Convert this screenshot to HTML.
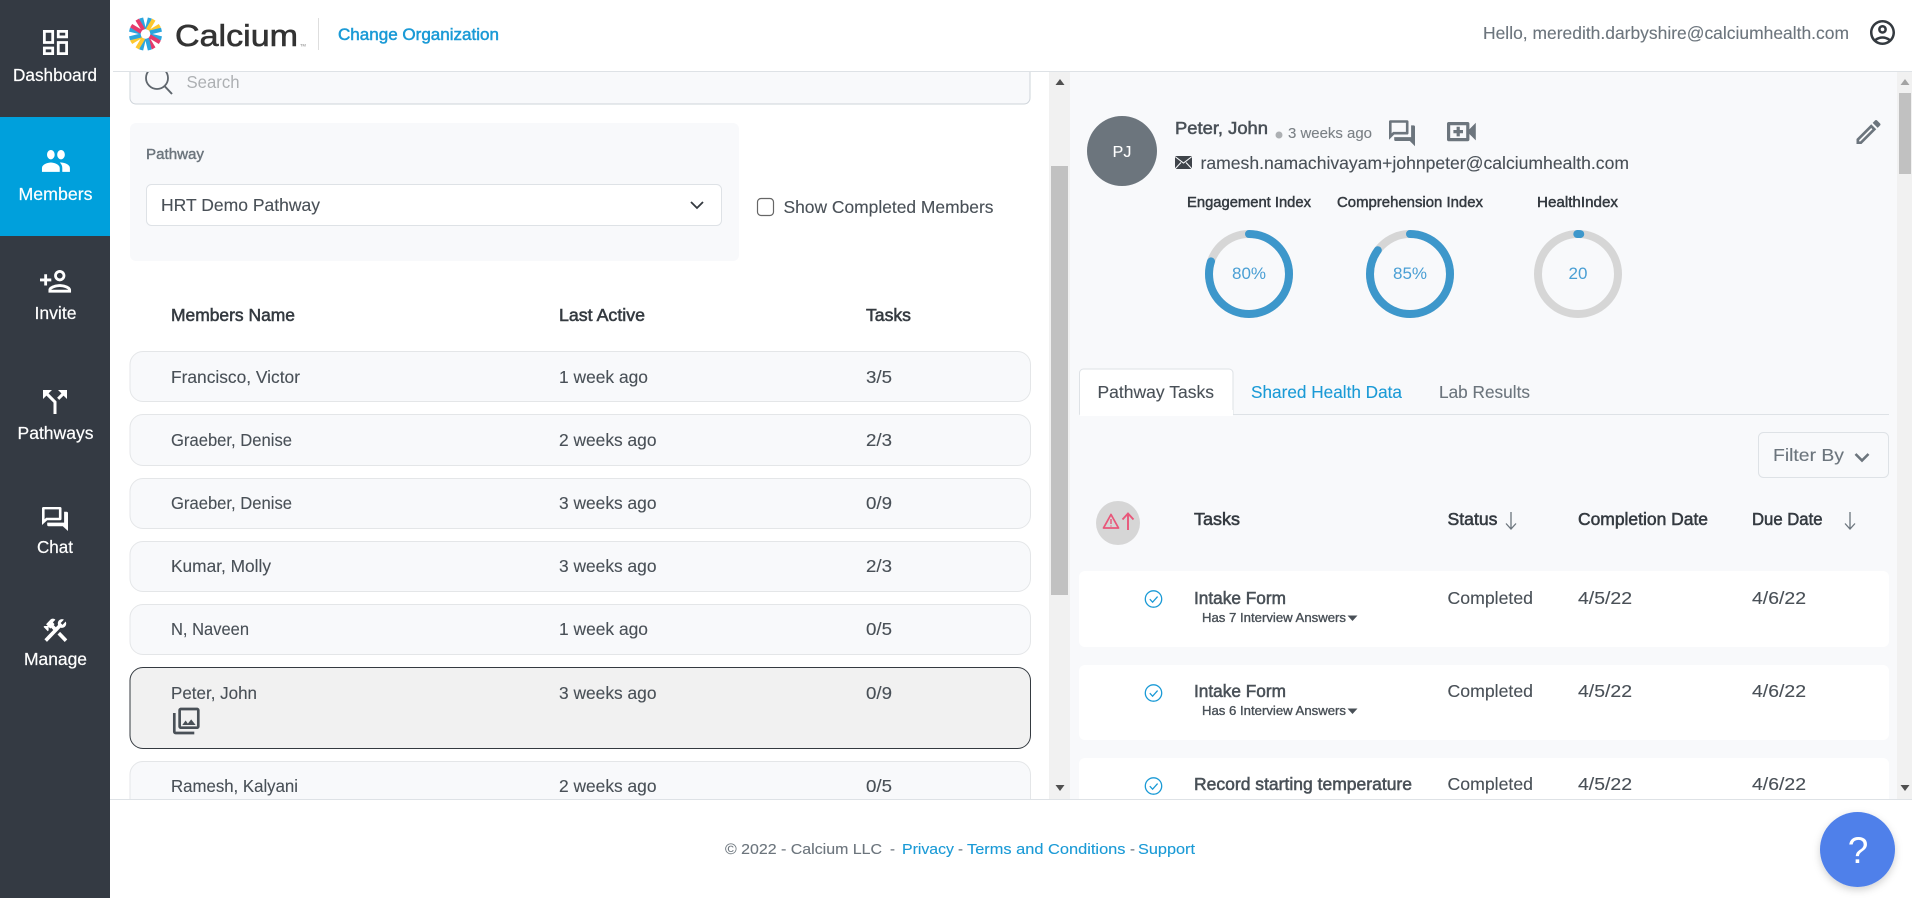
<!DOCTYPE html>
<html lang="en">
<head>
<meta charset="utf-8">
<title>Calcium</title>
<style>
html,body{margin:0;padding:0;background:#fff;width:1912px;height:898px;overflow:hidden}
svg{display:block}
text{font-family:"Liberation Sans",Arial,sans-serif;font-size:17.6px;fill:#495057;stroke:#495057;stroke-width:.12px}
.nav{fill:#fff;stroke:#fff;stroke-width:.2px}
.m{stroke:#495057;stroke-width:.55px}
.h{fill:#343a40;stroke:#343a40;stroke-width:.55px}
.b{fill:#1a9ad6;stroke:#1a9ad6}
.g{fill:#6c757d;stroke:#6c757d}
.p{fill:#4a9fd4;font-size:17px;stroke:none}
.l{font-size:14.4px;fill:#343a40;stroke:#343a40;stroke-width:.45px}
.f{font-size:15px}
.s{font-size:12.8px;stroke-width:.35px}
</style>
</head>
<body>
<svg width="1912" height="898" viewBox="0 0 1912 898" xmlns="http://www.w3.org/2000/svg">
<rect width="1912" height="898" fill="#fff"/>

<!-- LEFT PANEL -->
<path d="M130 60H1030V98a6 6 0 0 1-6 6H136a6 6 0 0 1-6-6Z" fill="#f8f9fb" stroke="#ced4da"/>
<circle cx="157" cy="78" r="11" fill="none" stroke="#5f666d" stroke-width="1.800"/>
<path d="M164.500 86L172 94" stroke="#5f666d" stroke-width="2" fill="none"/>
<text x="186.500" y="88" textLength="53" lengthAdjust="spacingAndGlyphs" style="fill:#adb0b3;stroke:none">Search</text>

<rect x="130" y="123" width="609" height="138" rx="6" fill="#f8f9fb"/>
<text x="146" y="159" style="font-size:14.4px;fill:#6c757d;stroke:#6c757d;stroke-width:.4px" textLength="58" lengthAdjust="spacingAndGlyphs">Pathway</text>
<rect x="146.500" y="184.500" width="575" height="41" rx="5" fill="#fff" stroke="#dee2e6"/>
<text x="161" y="211" textLength="159" lengthAdjust="spacingAndGlyphs">HRT Demo Pathway</text>
<path d="M691 202l6 6 6-6" fill="none" stroke="#343a40" stroke-width="1.800"/>
<rect x="757.500" y="198.500" width="16" height="17" rx="3.500" fill="#fff" stroke="#666" stroke-width="1.200"/>
<text x="783.500" y="213" textLength="210" lengthAdjust="spacingAndGlyphs">Show Completed Members</text>

<text class="h" x="171" y="321" textLength="124" lengthAdjust="spacingAndGlyphs">Members Name</text>
<text class="h" x="559" y="321" textLength="86" lengthAdjust="spacingAndGlyphs">Last Active</text>
<text class="h" x="866" y="321" textLength="45" lengthAdjust="spacingAndGlyphs">Tasks</text>

<rect x="130" y="351.500" width="900.500" height="50" rx="13" fill="#f8f9fb" stroke="#e4e6e8"/>
<text x="171" y="383" textLength="129" lengthAdjust="spacingAndGlyphs">Francisco, Victor</text>
<text x="559" y="383" textLength="89" lengthAdjust="spacingAndGlyphs">1 week ago</text>
<text x="866" y="383" textLength="26" lengthAdjust="spacingAndGlyphs">3/5</text>

<rect x="130" y="414.500" width="900.500" height="51" rx="13" fill="#f8f9fb" stroke="#e4e6e8"/>
<text x="171" y="446" textLength="121" lengthAdjust="spacingAndGlyphs">Graeber, Denise</text>
<text x="559" y="446" textLength="97.500" lengthAdjust="spacingAndGlyphs">2 weeks ago</text>
<text x="866" y="446" textLength="26" lengthAdjust="spacingAndGlyphs">2/3</text>

<rect x="130" y="478.500" width="900.500" height="50" rx="13" fill="#f8f9fb" stroke="#e4e6e8"/>
<text x="171" y="509" textLength="121" lengthAdjust="spacingAndGlyphs">Graeber, Denise</text>
<text x="559" y="509" textLength="97.500" lengthAdjust="spacingAndGlyphs">3 weeks ago</text>
<text x="866" y="509" textLength="26" lengthAdjust="spacingAndGlyphs">0/9</text>

<rect x="130" y="541.500" width="900.500" height="50" rx="13" fill="#f8f9fb" stroke="#e4e6e8"/>
<text x="171" y="572" textLength="100" lengthAdjust="spacingAndGlyphs">Kumar, Molly</text>
<text x="559" y="572" textLength="97.500" lengthAdjust="spacingAndGlyphs">3 weeks ago</text>
<text x="866" y="572" textLength="26" lengthAdjust="spacingAndGlyphs">2/3</text>

<rect x="130" y="604.500" width="900.500" height="50" rx="13" fill="#f8f9fb" stroke="#e4e6e8"/>
<text x="171" y="635" textLength="78" lengthAdjust="spacingAndGlyphs">N, Naveen</text>
<text x="559" y="635" textLength="89" lengthAdjust="spacingAndGlyphs">1 week ago</text>
<text x="866" y="635" textLength="26" lengthAdjust="spacingAndGlyphs">0/5</text>

<rect x="130" y="667.500" width="900.500" height="81" rx="13" fill="#f1f1f1" stroke="#343a40"/>
<text x="171" y="699" textLength="86" lengthAdjust="spacingAndGlyphs">Peter, John</text>
<text x="559" y="699" textLength="97.500" lengthAdjust="spacingAndGlyphs">3 weeks ago</text>
<text x="866" y="699" textLength="26" lengthAdjust="spacingAndGlyphs">0/9</text>
<g transform="translate(170.300 705) scale(1.333)" fill="#495057"><path d="M20 4v12H8V4h12m0-2H8c-1.100 0-2 .9-2 2v12c0 1.100.9 2 2 2h12c1.100 0 2-.9 2-2V4c0-1.100-.9-2-2-2zm-8.500 9.670l1.690 2.260 2.480-3.100L19 15H9zM2 6v14c0 1.100.9 2 2 2h14v-2H4V6H2z"/></g>

<rect x="130" y="761.500" width="900.500" height="60" rx="13" fill="#f8f9fb" stroke="#e4e6e8"/>
<text x="171" y="792" textLength="127" lengthAdjust="spacingAndGlyphs">Ramesh, Kalyani</text>
<text x="559" y="792" textLength="97.500" lengthAdjust="spacingAndGlyphs">2 weeks ago</text>
<text x="866" y="792" textLength="26" lengthAdjust="spacingAndGlyphs">0/5</text>

<!-- left scrollbar -->
<rect x="1049" y="71" width="21" height="728" fill="#f1f1f1"/>
<rect x="1051" y="166" width="17" height="429" fill="#c1c1c1"/>
<path d="M1060 79l4.500 6h-9z" fill="#505050"/>
<path d="M1060 791l4.500-6h-9z" fill="#505050"/>

<!-- RIGHT PANEL -->
<rect x="1070" y="71" width="827" height="728" fill="#f8f9fb"/>
<rect x="1897" y="71" width="15" height="728" fill="#f1f1f1"/>
<rect x="1899" y="93" width="12" height="81" fill="#c1c1c1"/>
<path d="M1905 79l4.500 6h-9z" fill="#a3a3a3"/>
<path d="M1905 791l4.500-6h-9z" fill="#505050"/>

<circle cx="1122" cy="151" r="35" fill="#6c757d"/>
<text x="1122" y="157" text-anchor="middle" style="fill:#fff;stroke:#fff;font-size:16px">PJ</text>
<text class="m" x="1175" y="134" textLength="93" lengthAdjust="spacingAndGlyphs">Peter, John</text>
<circle cx="1279" cy="135" r="3.500" fill="#adb0b3"/>
<text x="1288" y="138" textLength="84" lengthAdjust="spacingAndGlyphs" style="font-size:15px;fill:#7b8186;stroke:#7b8186">3 weeks ago</text>
<g transform="translate(1386.400 117.600) scale(1.300)" fill="#6c757d"><path d="M15 4v7H5.170l-.59.59-.58.58V4h11m1-2H3c-.55 0-1 .45-1 1v14l4-4h10c.55 0 1-.45 1-1V3c0-.55-.45-1-1-1zm5 4h-2v9H6v2c0 .55.45 1 1 1h11l4 4V7c0-.55-.45-1-1-1z"/></g>
<g transform="translate(1442.200 112.400) scale(1.600)" fill="#6c757d"><path d="M15 8v8H5V8h10m1-2H4c-.55 0-1 .45-1 1v10c0 .55.45 1 1 1h12c.55 0 1-.45 1-1v-3.500l4 4v-11l-4 4V7c0-.55-.45-1-1-1zm-3 5h-2V9H9v2H7v2h2v2h2v-2h2z"/></g>
<g transform="translate(1852.500 116) scale(1.333)" fill="#6c757d"><path d="M14.060 9.020l.92.92L5.920 19H5v-.92l9.060-9.060M17.660 3c-.25 0-.51.1-.7.29l-1.830 1.830 3.750 3.750 1.830-1.830c.39-.39.39-1.020 0-1.410l-2.340-2.340c-.2-.2-.45-.29-.71-.29zm-3.600 3.190L3 17.250V21h3.750L17.810 9.940l-3.750-3.750z"/></g>

<rect x="1175" y="156" width="17" height="13" fill="#3f444a"/>
<path d="M1175 156.500l8.500 6.500 8.500-6.500M1175 169l6-6.500M1192 169l-6-6.500" stroke="#f8f9fb" stroke-width="1.100" fill="none"/>
<text x="1200.500" y="169" textLength="428.500" lengthAdjust="spacingAndGlyphs">ramesh.namachivayam+johnpeter@calciumhealth.com</text>

<text class="l" x="1187" y="207" textLength="124" lengthAdjust="spacingAndGlyphs">Engagement Index</text>
<text class="l" x="1337" y="207" textLength="146" lengthAdjust="spacingAndGlyphs">Comprehension Index</text>
<text class="l" x="1537" y="207" textLength="81" lengthAdjust="spacingAndGlyphs">HealthIndex</text>

<g fill="none" stroke-width="8">
<circle cx="1249" cy="274" r="40" stroke="#d6d6d6"/>
<circle cx="1249" cy="274" r="40" stroke="#3d97cb" stroke-linecap="round" stroke-dasharray="201 251.300" transform="rotate(-90 1249 274)"/>
<circle cx="1410" cy="274" r="40" stroke="#d6d6d6"/>
<circle cx="1410" cy="274" r="40" stroke="#3d97cb" stroke-linecap="round" stroke-dasharray="213.600 251.300" transform="rotate(-90 1410 274)"/>
<circle cx="1578" cy="274" r="40" stroke="#d6d6d6"/>
<circle cx="1578" cy="274" r="40" stroke="#3d97cb" stroke-linecap="round" stroke-dasharray="3 251.300" transform="rotate(-91 1578 274)"/>
</g>
<text class="p" x="1249" y="279" text-anchor="middle">80%</text>
<text class="p" x="1410" y="279" text-anchor="middle">85%</text>
<text class="p" x="1578" y="279" text-anchor="middle">20</text>

<!-- tabs -->
<path d="M1079.500 414.500H1889" stroke="#dee2e6" fill="none"/>
<path d="M1079.500 414.500V373a4 4 0 0 1 4-4H1229a4 4 0 0 1 4 4V414.500" fill="#fff" stroke="#dee2e6"/>
<rect x="1080" y="410" width="153" height="6" fill="#fff"/>
<text x="1097.500" y="398" textLength="116.500" lengthAdjust="spacingAndGlyphs">Pathway Tasks</text>
<text class="b" x="1251" y="398" textLength="151" lengthAdjust="spacingAndGlyphs">Shared Health Data</text>
<text class="g" x="1439" y="398" textLength="91" lengthAdjust="spacingAndGlyphs">Lab Results</text>

<rect x="1758.500" y="432.500" width="130" height="45" rx="5" fill="none" stroke="#dee2e6"/>
<text class="g" x="1773" y="461" textLength="71" lengthAdjust="spacingAndGlyphs">Filter By</text>
<path d="M1855.500 454l6.500 6.500 6.500-6.500" fill="none" stroke="#6c757d" stroke-width="2.600"/>

<!-- table header -->
<circle cx="1118" cy="523" r="22" fill="#d6d6d6"/>
<path d="M1111 514.500l7.500 13.500h-15z" fill="none" stroke="#e8577a" stroke-width="1.800" stroke-linejoin="round"/>
<path d="M1111 519v5M1111 525.500v1" stroke="#e8577a" stroke-width="1.400"/>
<path d="M1128 530V514M1122.500 519.500l5.500-6 5.500 6" fill="none" stroke="#e8577a" stroke-width="1.900"/>

<text class="h" x="1194" y="525" textLength="46" lengthAdjust="spacingAndGlyphs">Tasks</text>
<text class="h" x="1447.500" y="525" textLength="50" lengthAdjust="spacingAndGlyphs">Status</text>
<path d="M1511 512V528M1506 523.500l5 5.500 5-5.500" fill="none" stroke="#6c757d" stroke-width="1.300"/>
<text class="h" x="1578" y="525" textLength="130" lengthAdjust="spacingAndGlyphs">Completion Date</text>
<text class="h" x="1752" y="525" textLength="70.500" lengthAdjust="spacingAndGlyphs">Due Date</text>
<path d="M1850 512V528M1845 523.500l5 5.500 5-5.500" fill="none" stroke="#6c757d" stroke-width="1.300"/>

<!-- task rows -->
<rect x="1079" y="571" width="810" height="76" rx="6" fill="#fff"/>
<circle cx="1153.500" cy="599" r="8.200" fill="none" stroke="#1a9ad6" stroke-width="1.300"/>
<path d="M1149.800 599.200l2.800 3 5-5.600" fill="none" stroke="#1a9ad6" stroke-width="1.300"/>
<text class="m" x="1194" y="604" textLength="92" lengthAdjust="spacingAndGlyphs">Intake Form</text>
<text class="s" x="1202" y="622" textLength="144" lengthAdjust="spacingAndGlyphs">Has 7 Interview Answers</text>
<path d="M1347.500 615.500h10l-5 5.500z" fill="#495057"/>
<text x="1447.500" y="604" textLength="85.500" lengthAdjust="spacingAndGlyphs">Completed</text>
<text x="1578" y="604" textLength="54" lengthAdjust="spacingAndGlyphs">4/5/22</text>
<text x="1752" y="604" textLength="54" lengthAdjust="spacingAndGlyphs">4/6/22</text>

<rect x="1079" y="665" width="810" height="75" rx="6" fill="#fff"/>
<circle cx="1153.500" cy="693" r="8.200" fill="none" stroke="#1a9ad6" stroke-width="1.300"/>
<path d="M1149.800 693.200l2.800 3 5-5.600" fill="none" stroke="#1a9ad6" stroke-width="1.300"/>
<text class="m" x="1194" y="697" textLength="92" lengthAdjust="spacingAndGlyphs">Intake Form</text>
<text class="s" x="1202" y="715" textLength="144" lengthAdjust="spacingAndGlyphs">Has 6 Interview Answers</text>
<path d="M1347.500 708.500h10l-5 5.500z" fill="#495057"/>
<text x="1447.500" y="697" textLength="85.500" lengthAdjust="spacingAndGlyphs">Completed</text>
<text x="1578" y="697" textLength="54" lengthAdjust="spacingAndGlyphs">4/5/22</text>
<text x="1752" y="697" textLength="54" lengthAdjust="spacingAndGlyphs">4/6/22</text>

<rect x="1079" y="758" width="810" height="70" rx="6" fill="#fff"/>
<circle cx="1153.500" cy="786" r="8.200" fill="none" stroke="#1a9ad6" stroke-width="1.300"/>
<path d="M1149.800 786.200l2.800 3 5-5.600" fill="none" stroke="#1a9ad6" stroke-width="1.300"/>
<text class="m" x="1194" y="790" textLength="218" lengthAdjust="spacingAndGlyphs">Record starting temperature</text>
<text x="1447.500" y="790" textLength="85.500" lengthAdjust="spacingAndGlyphs">Completed</text>
<text x="1578" y="790" textLength="54" lengthAdjust="spacingAndGlyphs">4/5/22</text>
<text x="1752" y="790" textLength="54" lengthAdjust="spacingAndGlyphs">4/6/22</text>

<!-- HEADER -->
<rect x="110" y="0" width="1802" height="71" fill="#fff"/>
<path d="M113 71.500H1912" stroke="#dee2e6" fill="none"/>
<g transform="translate(145.500 34)" stroke-width="4" fill="none">
<g stroke="#2ba6de"><path d="M-1.500-4.500L-4.300-16M1.500-4.500L4.300-16"/></g>
<g stroke="#fdc82f" transform="rotate(45)"><path d="M-1.500-4.500L-4.300-16M1.500-4.500L4.300-16"/></g>
<g stroke="#2ba6de" transform="rotate(90)"><path d="M-1.500-4.500L-4.300-16M1.500-4.500L4.300-16"/></g>
<g stroke="#e63a6b" transform="rotate(135)"><path d="M-1.500-4.500L-4.300-16M1.500-4.500L4.300-16"/></g>
<g stroke="#2ba6de" transform="rotate(180)"><path d="M-1.500-4.500L-4.300-16M1.500-4.500L4.300-16"/></g>
<g stroke="#fdc82f" transform="rotate(225)"><path d="M-1.500-4.500L-4.300-16M1.500-4.500L4.300-16"/></g>
<g stroke="#2ba6de" transform="rotate(270)"><path d="M-1.500-4.500L-4.300-16M1.500-4.500L4.300-16"/></g>
<g stroke="#e63a6b" transform="rotate(315)"><path d="M-1.500-4.500L-4.300-16M1.500-4.500L4.300-16"/></g>
</g>
<text x="175" y="46" textLength="123" lengthAdjust="spacingAndGlyphs" style="font-size:31px;fill:#333;stroke:#333;stroke-width:.6px">Calcium</text>
<text x="300" y="46.500" style="font-size:4px;fill:#777;stroke:none">TM</text>
<path d="M318.500 18V50" stroke="#dedede" fill="none"/>
<text x="338" y="40" textLength="161" lengthAdjust="spacingAndGlyphs" style="font-size:16.500px;fill:#1a9ad6;stroke:#1a9ad6;stroke-width:.5px">Change Organization</text>
<text class="g" x="1483" y="39" textLength="366" lengthAdjust="spacingAndGlyphs">Hello, meredith.darbyshire@calciumhealth.com</text>
<g transform="translate(1867.500 17.500) scale(1.250)" fill="#343a40"><path d="M12 2C6.480 2 2 6.480 2 12s4.480 10 10 10 10-4.480 10-10S17.520 2 12 2zM7.350 18.500C8.660 17.560 10.260 17 12 17s3.340.56 4.650 1.500c-1.310.94-2.910 1.500-4.650 1.500s-3.340-.56-4.650-1.500zm10.790-1.380C16.450 15.800 14.320 15 12 15s-4.450.8-6.140 2.120C4.700 15.730 4 13.950 4 12c0-4.420 3.580-8 8-8s8 3.580 8 8c0 1.950-.7 3.730-1.860 5.120z"/><path d="M12 6c-1.930 0-3.500 1.570-3.500 3.500S10.070 13 12 13s3.500-1.570 3.500-3.500S13.930 6 12 6zm0 5c-.83 0-1.500-.67-1.500-1.500S11.170 8 12 8s1.500.67 1.500 1.500S12.830 11 12 11z"/></g>

<!-- FOOTER -->
<rect x="110" y="799" width="1802" height="99" fill="#fff"/>
<path d="M110 799.500H1912" stroke="#dee2e6" fill="none"/>
<text class="g f" x="725" y="854" textLength="157" lengthAdjust="spacingAndGlyphs">© 2022 - Calcium LLC</text>
<text class="g f" x="890" y="854">-</text>
<text class="b f" x="902" y="854" textLength="52" lengthAdjust="spacingAndGlyphs">Privacy</text>
<text class="g f" x="958" y="854">-</text>
<text class="b f" x="967" y="854" textLength="158.500" lengthAdjust="spacingAndGlyphs">Terms and Conditions</text>
<text class="g f" x="1130" y="854">-</text>
<text class="b f" x="1138" y="854" textLength="57" lengthAdjust="spacingAndGlyphs">Support</text>

<defs><filter id="s" x="-30%" y="-30%" width="160%" height="160%"><feDropShadow dx="0" dy="3" stdDeviation="4" flood-color="#000" flood-opacity=".18"/></filter></defs>
<circle cx="1857.500" cy="849.500" r="37.500" fill="#5080ea" filter="url(#s)"/>
<text x="1858" y="863" text-anchor="middle" style="font-size:37px;fill:#fff;stroke:none">?</text>

<!-- SIDEBAR -->
<rect x="0" y="0" width="110" height="898" fill="#343a43"/>
<rect x="0" y="117" width="110" height="119" fill="#00a0dc"/>
<g fill="#fff">
<g transform="translate(38.800 25.800) scale(1.390)"><path d="M19 5v2h-4V5h4M9 5v6H5V5h4m10 8v6h-4v-6h4M9 17v2H5v-2h4M21 3h-8v6h8V3zM11 3H3v10h8V3zm10 8h-8v10h8V11zm-10 4H3v6h8v-6z"/></g>
<g transform="translate(40.700 142.200) scale(1.270 1.560)"><path d="M16 11c1.660 0 2.990-1.340 2.990-3S17.660 5 16 5c-1.660 0-3 1.340-3 3s1.340 3 3 3zm-8 0c1.660 0 2.990-1.340 2.990-3S9.660 5 8 5C6.340 5 5 6.340 5 8s1.340 3 3 3zm0 2c-2.330 0-7 1.170-7 3.500V19h14v-2.500c0-2.330-4.670-3.500-7-3.500zm8 0c-.29 0-.62.02-.97.05 1.160.84 1.970 1.970 1.970 3.450V19h6v-2.500c0-2.330-4.670-3.500-7-3.500z"/></g>
<g transform="translate(38.600 264.400) scale(1.410)"><path d="M15 12c2.210 0 4-1.790 4-4s-1.790-4-4-4-4 1.790-4 4 1.790 4 4 4zm0-6c1.100 0 2 .9 2 2s-.9 2-2 2-2-.9-2-2 .9-2 2-2zm0 8c-2.670 0-8 1.340-8 4v2h16v-2c0-2.660-5.330-4-8-4zm-6 4c.22-.72 3.310-2 6-2 2.700 0 5.800 1.290 6 2H9zm-3-3v-3h3v-2H6V7H4v3H1v2h3v3h2z"/></g>
<g transform="translate(37 384) scale(1.500)"><path d="M14 4l2.290 2.290-2.880 2.880 1.420 1.420 2.880-2.880L20 10V4zm-4 0H4v6l2.290-2.290 4.710 4.700V20h2v-8.410l-5.290-5.300z"/></g>
<g transform="translate(39.400 504.600) scale(1.300 1.200)"><path d="M15 4v7H5.170l-.59.59-.58.58V4h11m1-2H3c-.55 0-1 .45-1 1v14l4-4h10c.55 0 1-.45 1-1V3c0-.55-.45-1-1-1zm5 4h-2v9H6v2c0 .55.45 1 1 1h11l4 4V7c0-.55-.45-1-1-1z"/></g>
<g transform="translate(41 615.400) scale(1.200 1.250)"><path d="M13.780 15.300l6 6 2.110-2.160-6-6z"/><path d="M17.500 10c1.930 0 3.500-1.570 3.500-3.500 0-.58-.16-1.120-.41-1.600l-2.700 2.700-1.490-1.490 2.700-2.700c-.48-.25-1.020-.41-1.600-.41C15.570 3 14 4.570 14 6.500c0 .41.08.8.21 1.160l-1.850 1.850-1.780-1.780.71-.71-1.410-1.410L12 3.490c-1.170-1.170-3.070-1.170-4.240 0L4.220 7.030l1.410 1.410H2.810l-.71.71 3.540 3.540.71-.71V9.150l1.410 1.410.71-.71 1.780 1.780-7.410 7.410 2.120 2.120L16.340 9.790c.36.13.75.21 1.160.21z"/></g>
</g>
<text class="nav" x="13" y="81" textLength="84" lengthAdjust="spacingAndGlyphs">Dashboard</text>
<text class="nav" x="18.500" y="200" textLength="74" lengthAdjust="spacingAndGlyphs">Members</text>
<text class="nav" x="34.500" y="319" textLength="42" lengthAdjust="spacingAndGlyphs">Invite</text>
<text class="nav" x="17.500" y="439" textLength="76" lengthAdjust="spacingAndGlyphs">Pathways</text>
<text class="nav" x="37" y="553" textLength="36" lengthAdjust="spacingAndGlyphs">Chat</text>
<text class="nav" x="24" y="665" textLength="63" lengthAdjust="spacingAndGlyphs">Manage</text>
</svg>
</body>
</html>
